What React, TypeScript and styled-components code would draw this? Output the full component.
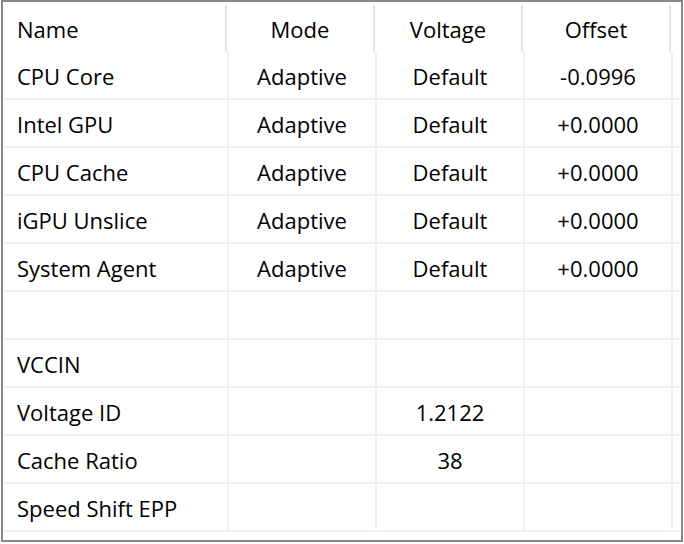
import React from "react";
import styled, { createGlobalStyle } from "styled-components";

const Global = createGlobalStyle`
  html, body { margin: 0; padding: 0; background: #ffffff; }
  body { font-family: "Open Sans", "Noto Sans", "DejaVu Sans", sans-serif; }
`;

const Frame = styled.div`
  box-sizing: border-box;
  margin-left: 1px;
  width: 682px;
  height: 542px;
  border: 2px solid #86888d;
  background: #ffffff;
  overflow: hidden;
  color: #000000;
  font-size: 22px;
`;

const HeaderRow = styled.div`
  display: flex;
  height: 50px;
  align-items: flex-end;
`;

const HeaderCell = styled.div<{ $w: number; $left?: boolean }>`
  box-sizing: border-box;
  width: ${(p) => p.$w}px;
  height: 47px;
  border-right: 2px solid #e4e4e4;
  display: flex;
  align-items: center;
  justify-content: ${(p) => (p.$left ? "flex-start" : "center")};
  padding-left: ${(p) => (p.$left ? "14px" : "0")};
  padding-bottom: 0;
  line-height: 1;
`;

const Row = styled.div`
  display: flex;
  height: 48px;
  box-sizing: border-box;
  border-bottom: 2px solid #f0f0f0;
`;

const Cell = styled.div<{ $w: number; $left?: boolean }>`
  box-sizing: border-box;
  width: ${(p) => p.$w}px;
  border-right: 2px solid #f0f0f0;
  display: flex;
  align-items: center;
  justify-content: ${(p) => (p.$left ? "flex-start" : "center")};
  padding-left: ${(p) => (p.$left ? "14px" : "0")};
  padding-top: 2px;
  line-height: 1;
  white-space: nowrap;
`;

const Filler = styled.div`
  flex: 1;
`;

const rows: [string, string, string, string][] = [
  ["CPU Core", "Adaptive", "Default", "-0.0996"],
  ["Intel GPU", "Adaptive", "Default", "+0.0000"],
  ["CPU Cache", "Adaptive", "Default", "+0.0000"],
  ["iGPU Unslice", "Adaptive", "Default", "+0.0000"],
  ["System Agent", "Adaptive", "Default", "+0.0000"],
  ["", "", "", ""],
  ["VCCIN", "", "", ""],
  ["Voltage ID", "", "1.2122", ""],
  ["Cache Ratio", "", "38", ""],
  ["Speed Shift EPP", "", "", ""],
];

export default function App() {
  return (
    <>
      <Global />
      <Frame>
        <HeaderRow>
          <HeaderCell $w={224} $left>Name</HeaderCell>
          <HeaderCell $w={148}>Mode</HeaderCell>
          <HeaderCell $w={148}>Voltage</HeaderCell>
          <HeaderCell $w={148}>Offset</HeaderCell>
        </HeaderRow>
        {rows.map((r, i) => (
          <Row key={i}>
            <Cell $w={226} $left>{r[0]}</Cell>
            <Cell $w={148}>{r[1]}</Cell>
            <Cell $w={148}>{r[2]}</Cell>
            <Cell $w={148}>{r[3]}</Cell>
            <Filler />
          </Row>
        ))}
      </Frame>
    </>
  );
}
